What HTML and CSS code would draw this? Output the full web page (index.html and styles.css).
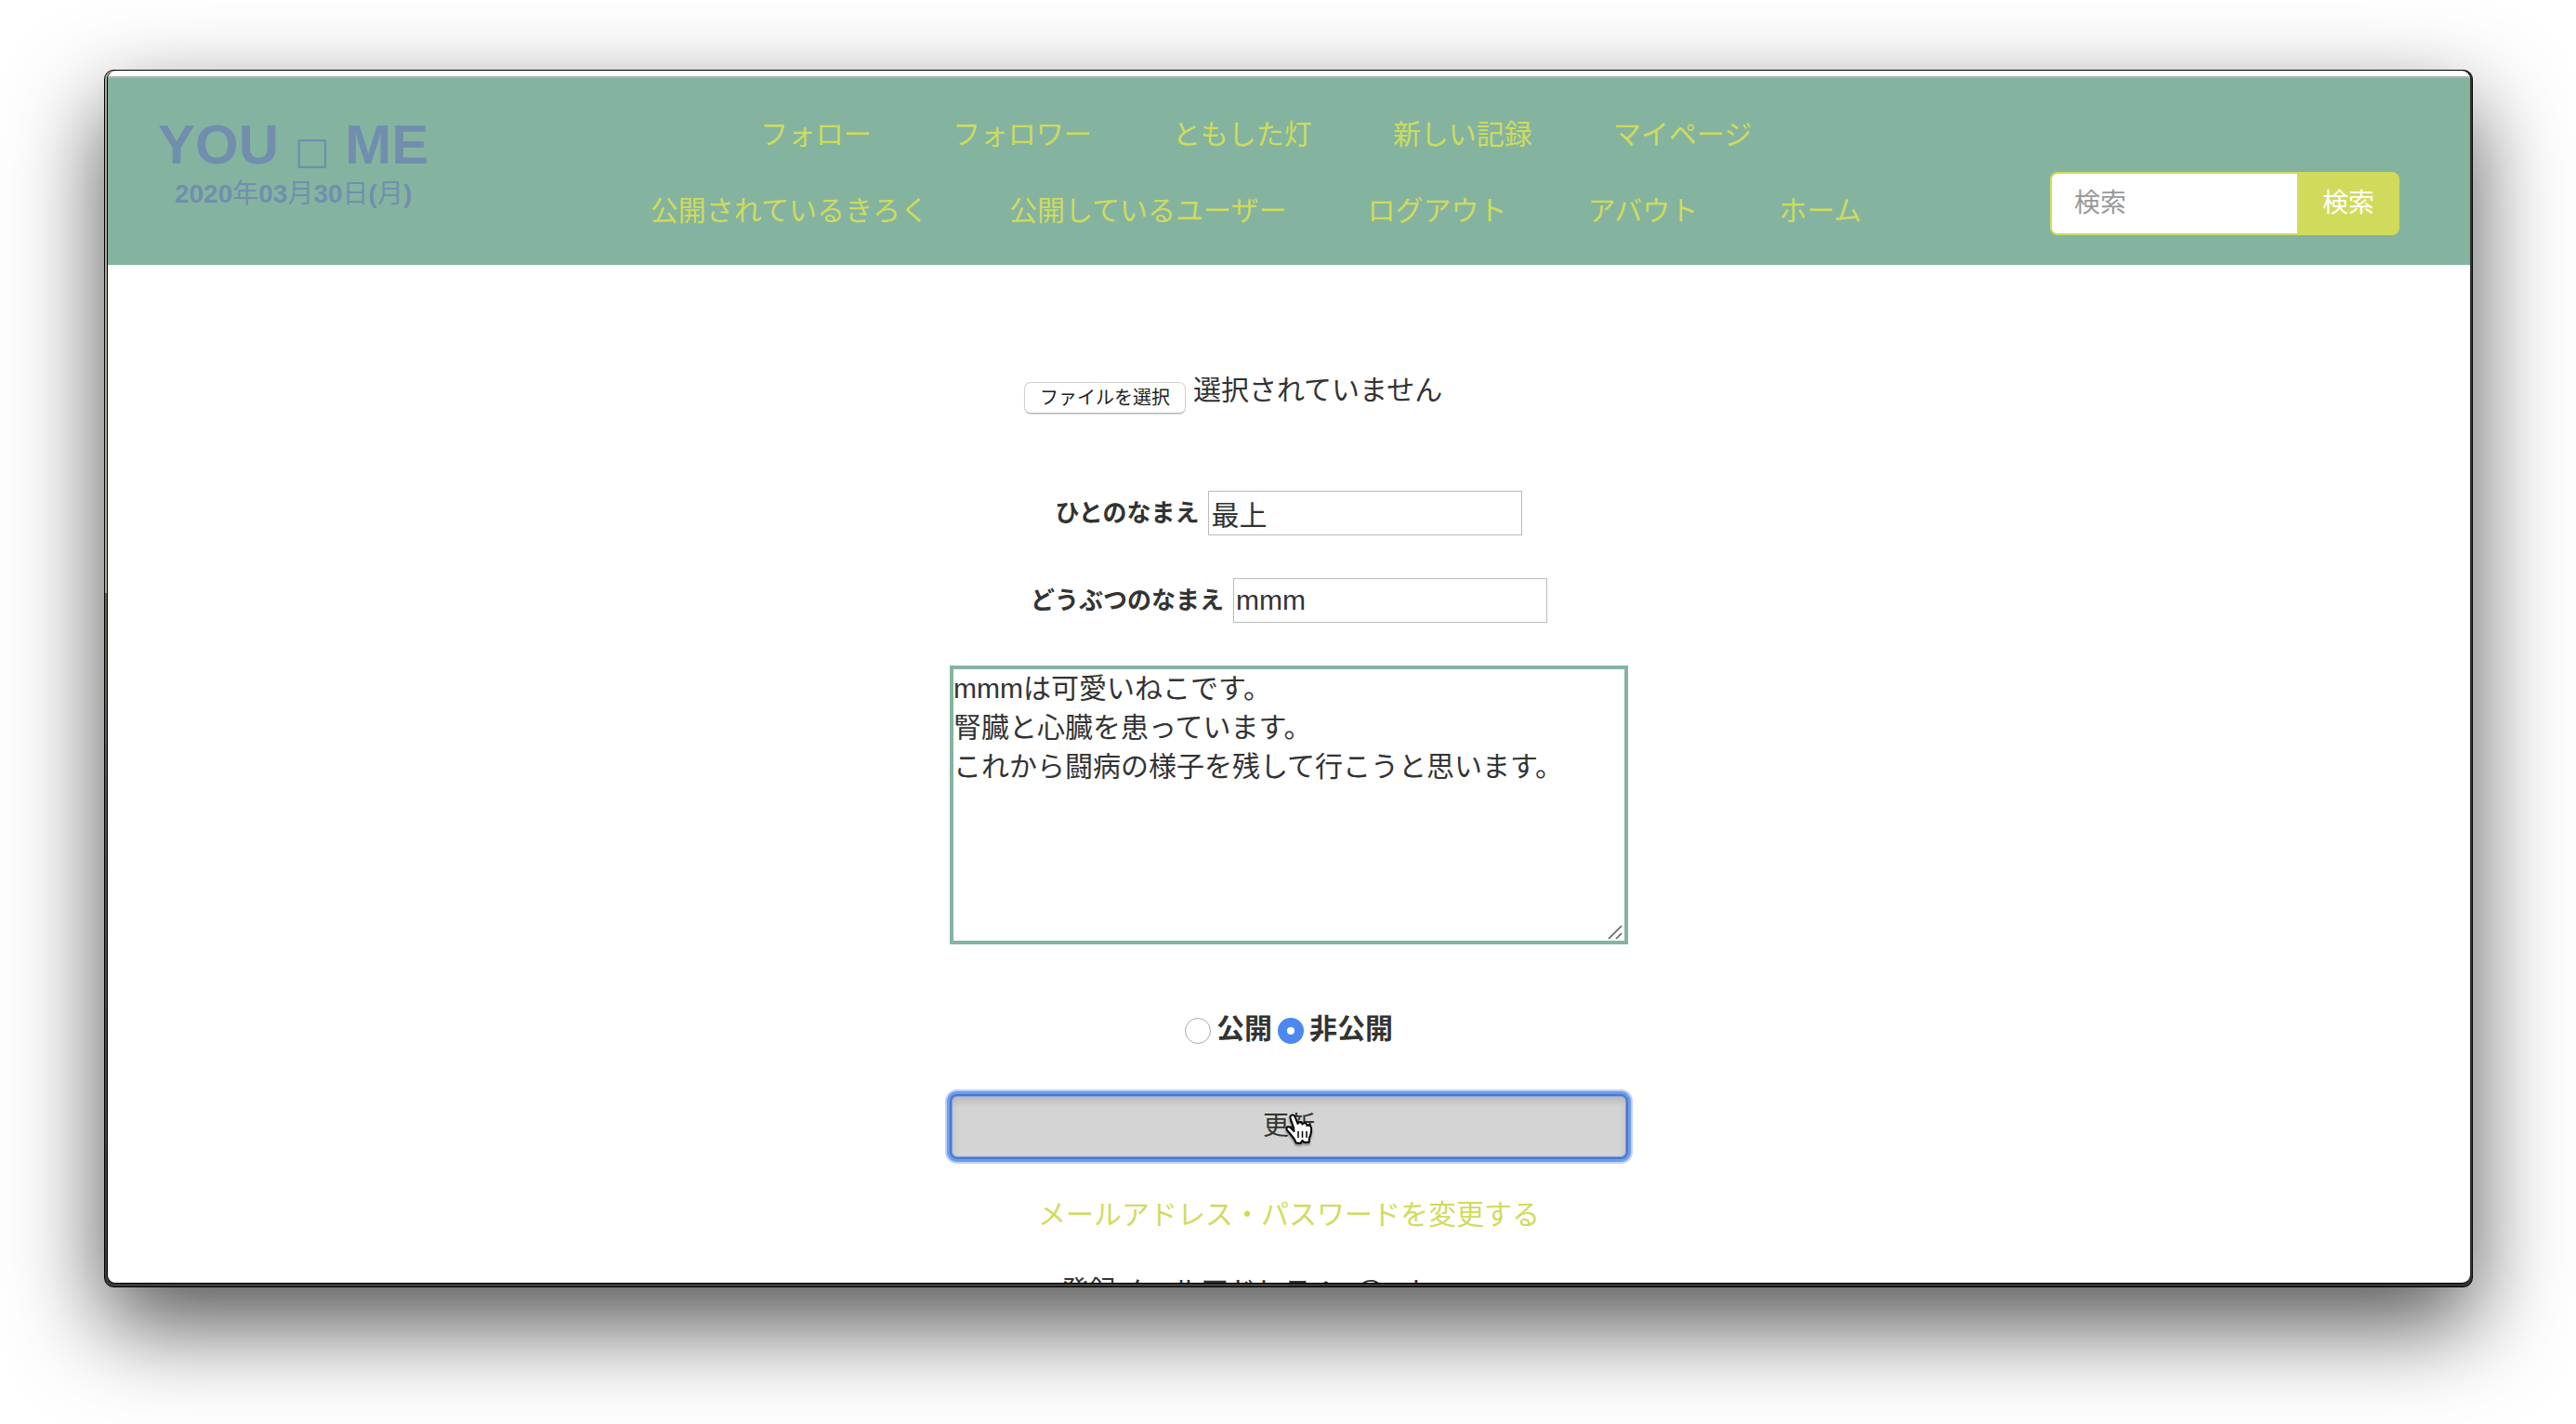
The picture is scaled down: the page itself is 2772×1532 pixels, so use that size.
FILE: index.html
```html
<!DOCTYPE html>
<html lang="ja">
<head>
  <meta charset="utf-8">
  <meta name="viewport" content="width=device-width, initial-scale=1">
  <title>YOU □ ME</title>
  <link rel="stylesheet" href="styles.css">
</head>
<body>
  <div class="window">
    <div class="page">
      <header class="header">
        <div class="brand">
          <h1 class="brand-name">YOU <span class="brand-box">□</span> ME</h1>
          <p class="brand-date"><b>2020</b>年<b>03</b>月<b>30</b>日<b>(</b>月<b>)</b></p>
        </div>
        <nav class="nav">
          <ul class="nav-list">
            <li><a href="#">フォロー</a></li>
            <li><a href="#">フォロワー</a></li>
            <li><a href="#">ともした灯</a></li>
            <li><a href="#">新しい記録</a></li>
            <li><a href="#">マイページ</a></li>
            <li><a href="#">公開されているきろく</a></li>
            <li><a href="#">公開しているユーザー</a></li>
            <li><a href="#">ログアウト</a></li>
            <li><a href="#">アバウト</a></li>
            <li><a href="#">ホーム</a></li>
          </ul>
        </nav>
        <form class="search">
          <input class="search-input" type="search" placeholder="検索" aria-label="検索">
          <button class="search-button" type="button">検索</button>
        </form>
      </header>
      <main class="main">
        <form class="form">
          <div class="file">
            <input class="file-input" type="file" id="image">
            <label class="file-button" for="image">ファイルを選択</label>
            <span>選択されていません</span>
          </div>
          <div class="field">
            <label class="field-label" for="person">ひとのなまえ</label>
            <input class="field-input" type="text" id="person" value="最上">
          </div>
          <div class="field">
            <label class="field-label" for="animal">どうぶつのなまえ</label>
            <input class="field-input" type="text" id="animal" value="mmm">
          </div>
          <div class="intro-wrap">
            <textarea class="intro" aria-label="紹介">mmmは可愛いねこです。
腎臓と心臓を患っています。
これから闘病の様子を残して行こうと思います。</textarea>
            <svg class="grip" viewBox="0 0 16 16" aria-hidden="true">
              <path d="M1 15L15 1M9 15L15 9" fill="none" stroke="#555" stroke-width="1.500"/>
            </svg>
          </div>
          <div class="choices">
            <input class="radio" type="radio" name="status" id="open">
            <label for="open">公開</label>
            <input class="radio" type="radio" name="status" id="closed" checked>
            <label for="closed">非公開</label>
          </div>
          <div class="submit-wrap">
            <button class="submit" type="button">更新</button>
            <svg class="cursor" viewBox="0 0 30 34" aria-hidden="true">
              <path d="M9 15 L5.500 5 C4.500 1.500 9 0 10.500 3.500 L13.500 11 C14 8.500 18 8.500 18.500 11.500 C20 9.500 23 10 23.500 13 C25.500 11.500 28 13 28 16 C28.500 21 27.500 23 26 26 L25.500 31 L20.500 31 L18.500 29 L16.500 32 L11.500 31.500 C11 28 7.500 24 2 18 C0 14.500 3.500 13 6 15.500 L9.500 19 Z" fill="#fff" stroke="#000" stroke-width="2" stroke-linejoin="round"/>
              <path d="M14 19v7M18.500 19v7M23 19v7" fill="none" stroke="#000" stroke-width="1.500"/>
            </svg>
          </div>
        </form>
        <a class="account-link" href="#">メールアドレス・パスワードを変更する</a>
        <p class="account-mail">登録メールアドレス：a@cakes.com</p>
      </main>
    </div>
  </div>
</body>
</html>
```
FILE: styles.css
```css
* {
  box-sizing: border-box;
}

body {
  display: flex;
  height: 100vh;
  margin: 0;
  padding: 75px 111px 147px 112px;
  overflow: hidden;
  background: #fff;
  color: #333;
  font-family: "Liberation Sans", "Noto Sans CJK JP", sans-serif;
  font-size: 30px;
  line-height: 42px;
}

h1,
p,
ul {
  margin: 0;
  padding: 0;
}

input,
textarea,
button {
  color: inherit;
  font: inherit;
}

a {
  color: #d0db5c;
  text-decoration: none;
}

/* Window frame and its shadow */
.window {
  display: flex;
  flex: 1;
  padding: 0 2px 3px;
  border: 1px solid #000;
  border-radius: 10px;
  background: linear-gradient(90deg, transparent 50%, #333 50%), linear-gradient(#b4ad9c 0 43%, #6e6459 43% 50%, #55534f 60%, #3c3b39);
  box-shadow: 0 40px 100px rgba(0, 0, 0, 0.68);
}

.page {
  flex: 1;
  overflow: hidden;
  border: solid #000;
  border-width: 0 0 1px 1px;
  border-radius: 9px;
  background: #fff;
}

/* Header */
.header {
  display: flex;
  margin-top: 6px;
  padding: 40px 76px 32px 54px;
  border-top: 2px solid #b0b0b0;
  background: #84b4a0;
}

.brand {
  color: #728eae;
  text-align: center;
}

.brand-name {
  font-size: 60px;
  line-height: 64px;
}

.brand-box {
  font-family: "DejaVu Sans", sans-serif;
  font-size: 40px;
  font-weight: 400;
}

.brand-date {
  font-size: 28px;
  line-height: 30px;
}

.nav {
  display: flex;
  flex: 1;
  justify-content: center;
  padding: 0 0 5px 36px;
}

.nav-list {
  display: flex;
  flex-wrap: wrap;
  justify-content: center;
  gap: 40px 87px;
  max-width: 1400px;
  list-style: none;
}

.search {
  display: flex;
  align-self: flex-end;
  width: 376px;
  height: 68px;
  font-size: 28px;
}

.search-input {
  flex: 1;
  min-width: 0;
  padding: 0 24px;
  border: 2px solid #d0db5c;
  border-right: 0;
  border-radius: 8px 0 0 8px;
  background: #fff;
  appearance: none;
}

.search-input::placeholder {
  color: #999;
}

.search-button {
  padding: 0 27px;
  border: 0;
  border-radius: 0 8px 8px 0;
  background: #d0db5c;
  color: #fff;
}

/* Profile form */
.main {
  display: flex;
  flex-direction: column;
  align-items: center;
  padding-top: 114px;
}

.form {
  display: flex;
  flex-direction: column;
  align-items: center;
  width: 730px;
}

.file {
  display: flex;
  gap: 8px;
  width: 570px;
  margin-bottom: 83px;
}

.file-input {
  position: absolute;
  width: 1px;
  height: 1px;
  opacity: 0;
}

.file-button {
  height: 34px;
  margin-top: 12px;
  padding: 0 16px;
  border: 1px solid #d0d0d0;
  border-bottom-color: #b0b0b0;
  border-radius: 7px;
  box-shadow: 0 1px 1px rgba(0, 0, 0, 0.15);
  color: #222;
  font-size: 20px;
  line-height: 32px;
}

.field {
  display: flex;
  align-items: center;
  gap: 10px;
  margin-bottom: 46px;
}

.field-label {
  font-size: 26px;
  font-weight: 700;
}

.field-input {
  width: 338px;
  height: 48px;
  padding: 0 2px;
  border: 1px solid #bbb;
  background: #fff;
}

.intro-wrap {
  position: relative;
  width: 100%;
}

.intro {
  display: block;
  width: 100%;
  height: 300px;
  padding: 0;
  border: 4px solid #84b4a0;
  background: #fff;
  resize: none;
}

.grip {
  position: absolute;
  right: 6px;
  bottom: 5px;
  width: 16px;
  height: 16px;
}

.choices {
  display: flex;
  align-items: center;
  gap: 6px;
  margin: 70px 0 49px;
  font-weight: 700;
}

.radio {
  width: 28px;
  height: 28px;
  margin: 4px 0 0;
  border: 1px solid #aaa;
  border-radius: 50%;
  background: #fff;
  appearance: none;
}

.radio:checked {
  border: 10px solid #4d88f0;
}

.submit-wrap {
  position: relative;
  width: 100%;
}

.submit {
  display: block;
  width: 100%;
  height: 70px;
  border: 2px solid #4a76cc;
  border-radius: 8px;
  background: #d4d4d4;
  box-shadow: 0 0 0 3px #6f9ced, 0 0 0 5px #bfd3f5, inset 0 0 0 1px #7fa0dd, inset 0 5px 8px rgba(0, 0, 0, 0.15);
  font-size: 28px;
}

.cursor {
  position: absolute;
  top: 21px;
  left: calc(50% - 4px);
  width: 30px;
  height: 34px;
  filter: drop-shadow(0 2px 1px rgba(0, 0, 0, 0.4));
}

.account-link {
  margin: 39px 0 40px;
}
```
